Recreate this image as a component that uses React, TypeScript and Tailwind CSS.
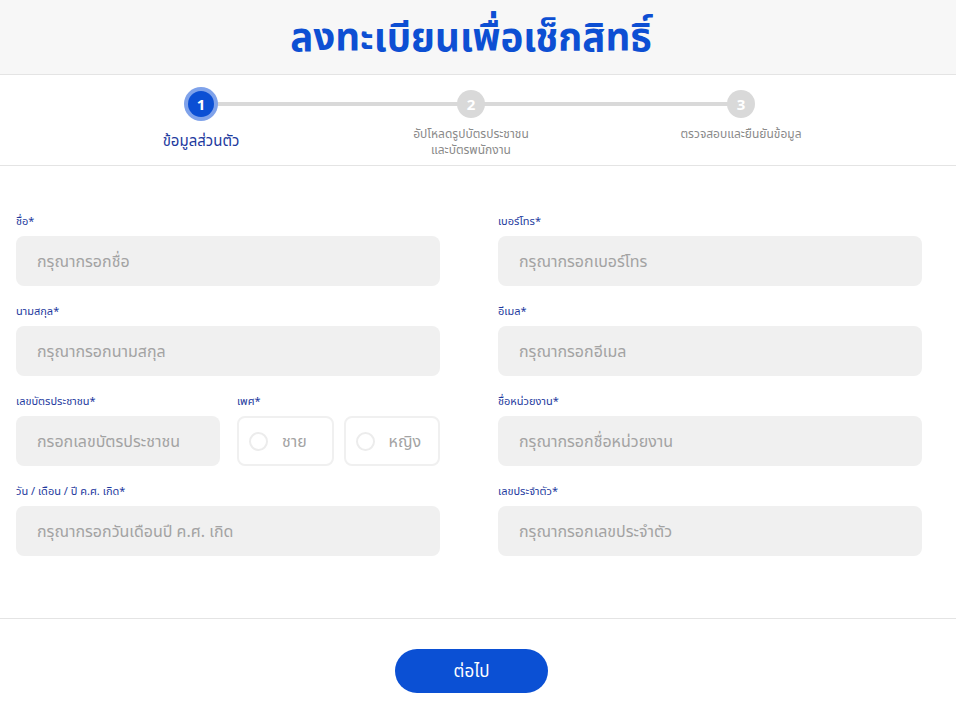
const font = { fontFamily: '"Noto Sans", "Noto Sans Thai", Tahoma, sans-serif' };

const steps = [
  { n: 1, label: ["ข้อมูลส่วนตัว"], active: true },
  { n: 2, label: ["อัปโหลดรูปบัตรประชาชน", "และบัตรพนักงาน"], active: false },
  { n: 3, label: ["ตรวจสอบและยืนยันข้อมูล"], active: false },
];

function Field({ label, placeholder }: { label: string; placeholder: string }) {
  return (
    <div className="flex flex-col">
      <label className="text-[11px] leading-[14px] text-[#1e3a9e] mb-[8px]">{label}</label>
      <div className="h-[50px] rounded-lg bg-[#f0f0f0] flex items-center pl-[21px] text-[16px] text-[#a3a3a3]">
        {placeholder}
      </div>
    </div>
  );
}

function Radio({ label }: { label: string }) {
  return (
    <div className="h-[50px] rounded-lg border-2 border-[#f0f0f0] flex items-center pl-[10px] gap-[14px] text-[16px] text-[#a3a3a3]">
      <span className="w-[19px] h-[19px] rounded-full border-2 border-[#ececec]" />
      {label}
    </div>
  );
}

export default function App() {
  return (
    <div className="w-[956px] h-[711px] bg-white flex flex-col" style={font}>
      <header className="h-[75px] bg-[#f7f7f7] border-b border-[#e4e4e4] flex items-center justify-center">
        <h1 className="text-[38.5px] font-bold text-[#0d4fd3] leading-none -mt-[2px] pr-[14px]">ลงทะเบียนเพื่อเช็กสิทธิ์</h1>
      </header>

      <div className="h-[91px] border-b border-[#e4e4e4]">
        <div className="pl-[66px] w-[876px] grid grid-cols-3">
          {steps.map((s, i) => (
            <div key={s.n} className="relative flex flex-col items-center pt-[12px]">
              {i < steps.length - 1 && (
                <div className="absolute top-[27px] left-1/2 w-full h-[4px] bg-[#d9d9d9]" />
              )}
              <div className="relative h-[34px] flex items-center justify-center">
                {s.active ? (
                  <div className="w-[34px] h-[34px] rounded-full bg-[#7fa2ea] flex items-center justify-center">
                    <div className="w-[26px] h-[26px] rounded-full bg-[#0b4fd4] text-white text-[15px] font-bold flex items-center justify-center">
                      {s.n}
                    </div>
                  </div>
                ) : (
                  <div className="w-[28px] h-[28px] rounded-full bg-[#d9d9d9] text-white text-[15px] font-bold flex items-center justify-center">
                    {s.n}
                  </div>
                )}
              </div>
              <div
                className={
                  s.active
                    ? "mt-[10px] text-[15px] leading-[18px] text-[#1e3a9e] text-center"
                    : "mt-[5px] text-[12px] leading-[16px] text-[#8a8a8a] text-center"
                }
              >
                {s.label.map((l) => (
                  <div key={l}>{l}</div>
                ))}
              </div>
            </div>
          ))}
        </div>
      </div>

      <div className="pt-[48px] pb-[62px] pl-4 pr-[34px] grid grid-cols-2 gap-x-[58px] gap-y-[18px] border-b border-[#e4e4e4]">
        <Field label="ชื่อ*" placeholder="กรุณากรอกชื่อ" />
        <Field label="เบอร์โทร*" placeholder="กรุณากรอกเบอร์โทร" />
        <Field label="นามสกุล*" placeholder="กรุณากรอกนามสกุล" />
        <Field label="อีเมล*" placeholder="กรุณากรอกอีเมล" />
        <div className="flex gap-[17px]">
          <div className="w-[204px]">
            <Field label="เลขบัตรประชาชน*" placeholder="กรอกเลขบัตรประชาชน" />
          </div>
          <div className="flex-1 flex flex-col">
            <label className="text-[11px] leading-[14px] text-[#1e3a9e] mb-[8px]">เพศ*</label>
            <div className="grid grid-cols-2 gap-[10px]">
              <Radio label="ชาย" />
              <Radio label="หญิง" />
            </div>
          </div>
        </div>
        <Field label="ชื่อหน่วยงาน*" placeholder="กรุณากรอกชื่อหน่วยงาน" />
        <Field label="วัน / เดือน / ปี ค.ศ. เกิด*" placeholder="กรุณากรอกวันเดือนปี ค.ศ. เกิด" />
        <Field label="เลขประจำตัว*" placeholder="กรุณากรอกเลขประจำตัว" />
      </div>

      <div className="flex justify-center pt-[30px] pr-[13px]">
        <button className="w-[153px] h-[44px] rounded-full bg-[#0b50d4] text-white text-[17px]">ต่อไป</button>
      </div>
    </div>
  );
}
